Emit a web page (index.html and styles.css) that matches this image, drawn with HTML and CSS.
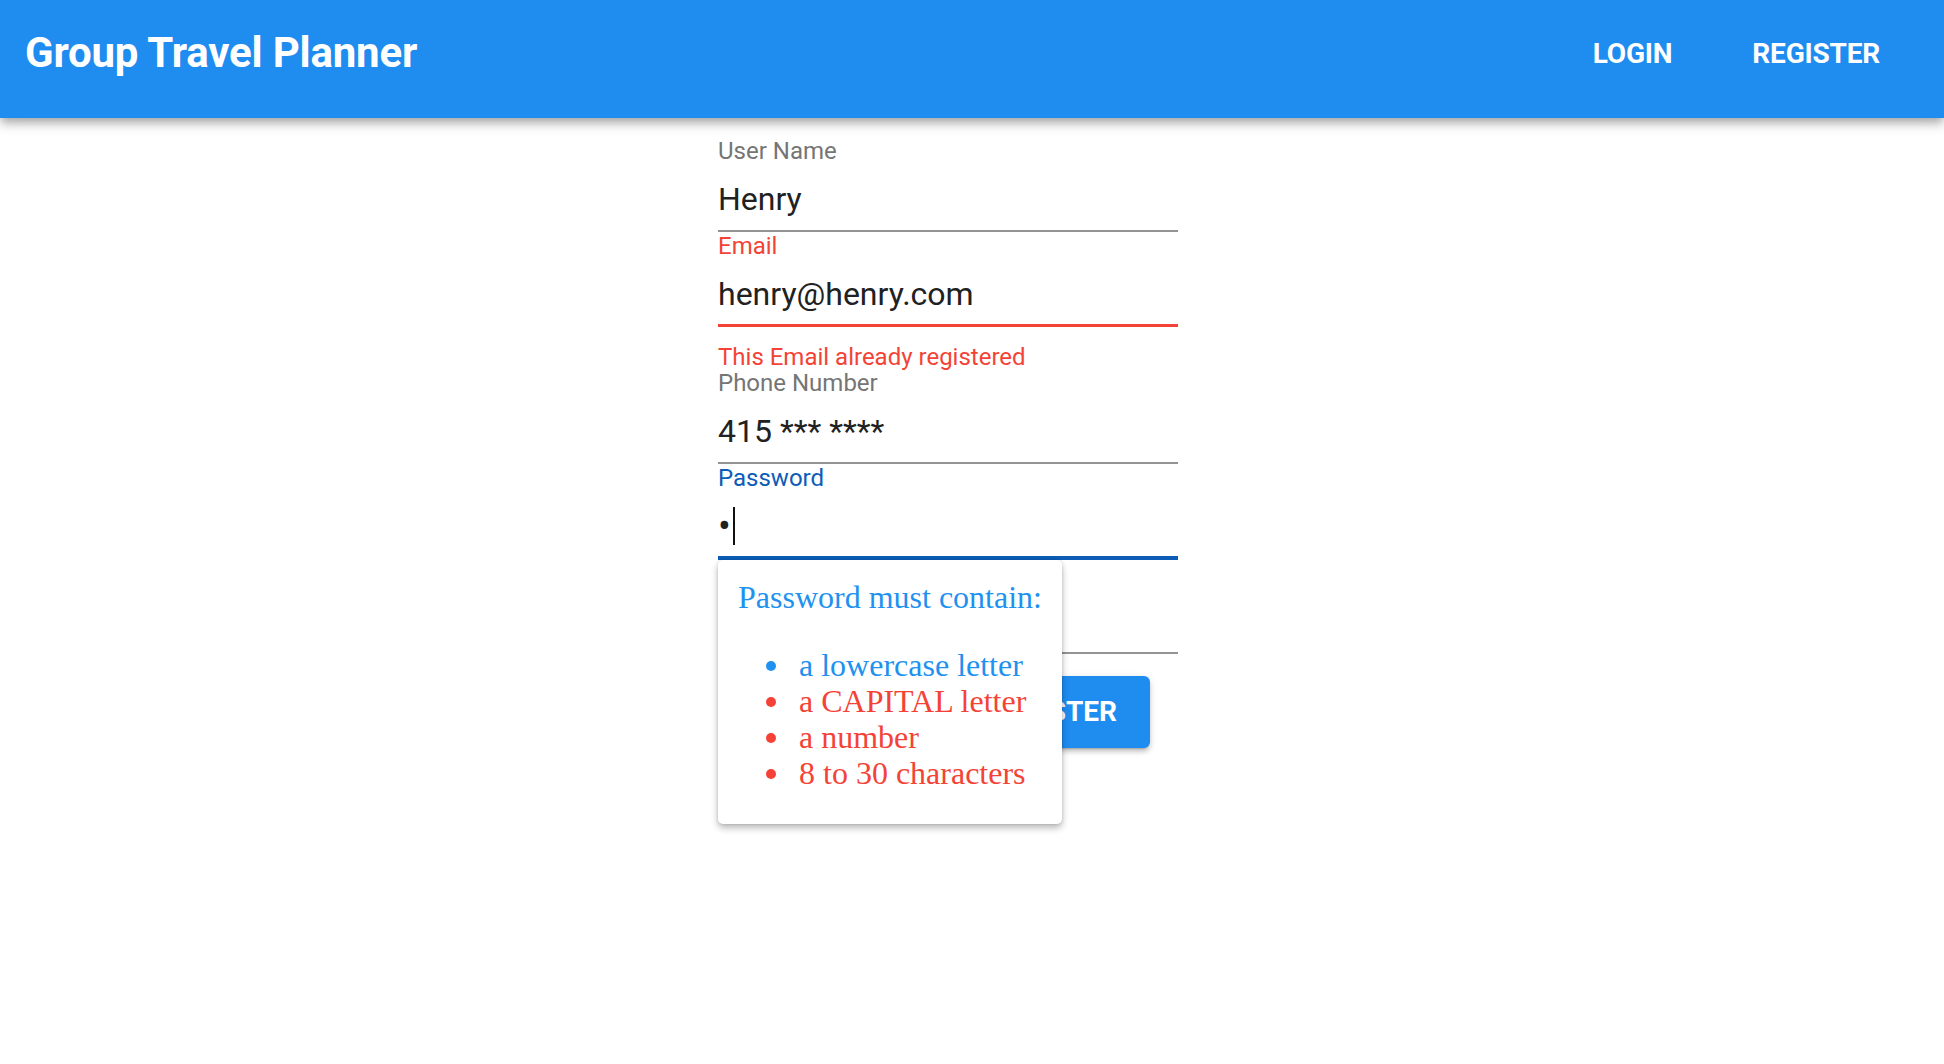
FILE: index.html
```html
<!DOCTYPE html>
<html lang="en">
<head>
<meta charset="utf-8">
<title>Group Travel Planner</title>
<link rel="stylesheet" href="styles.css">
</head>
<body>
<header class="appbar">
  <div class="brand">Group Travel Planner</div>
  <nav class="nav">
    <a class="nav-link">Login</a>
    <a class="nav-link">Register</a>
  </nav>
</header>
<main class="page">
  <form class="form">
    <div class="field">
      <div class="label">User Name</div>
      <div class="value">Henry</div>
      <div class="line"></div>
    </div>
    <div class="field field-error">
      <div class="label">Email</div>
      <div class="value">henry@henry.com</div>
      <div class="line"></div>
    </div>
    <div class="helper">This Email already registered</div>
    <div class="field">
      <div class="label">Phone Number</div>
      <div class="value">415 *** ****</div>
      <div class="line"></div>
    </div>
    <div class="field field-focus">
      <div class="label">Password</div>
      <div class="value"><span class="dot">•</span><span class="caret"></span></div>
      <div class="line"></div>
      <div class="popup">
        <div class="popup-title">Password must contain:</div>
        <ul class="rules">
          <li class="ok">a lowercase letter</li>
          <li class="bad">a CAPITAL letter</li>
          <li class="bad">a number</li>
          <li class="bad">8 to 30 characters</li>
        </ul>
      </div>
    </div>
    <div class="field">
      <div class="label"></div>
      <div class="value"></div>
      <div class="line"></div>
    </div>
    <div class="actions">
      <button type="button" class="btn">Register</button>
    </div>
  </form>
</main>
</body>
</html>
```
FILE: styles.css
```css
* { box-sizing: border-box; }
html, body { margin: 0; padding: 0; background: #fff; }
body { font-family: Roboto, "Noto Sans", "Liberation Sans", sans-serif; color: #212121; min-height: 100vh; }

.appbar {
  height: 118px;
  background: #1f8cf0;
  color: #fff;
  display: flex;
  align-items: flex-start;
  justify-content: space-between;
  padding: 28px 64px 0 25px;
  box-shadow: 0 4px 8px -2px rgba(0,0,0,0.2), 0 7px 9px 0 rgba(0,0,0,0.14), 0 2px 18px 0 rgba(0,0,0,0.12);
  position: relative;
  z-index: 2;
}
.brand { font-size: 42px; font-weight: 700; line-height: 50px; letter-spacing: -0.2px; }
.nav { display: flex; gap: 80px; padding-top: 1px; }
.nav-link { font-size: 28px; font-weight: 700; line-height: 50px; text-transform: uppercase; color: #fff; letter-spacing: -0.2px; }

.page { display: flex; justify-content: center; padding-top: 19px; min-height: calc(100vh - 118px); }
.form { width: 460px; margin-right: 48px; display: flex; flex-direction: column; padding-bottom: 120px; }

.field { position: relative; height: 95px; display: flex; flex-direction: column; }
.label { font-size: 24px; line-height: 28px; height: 28px; color: #757575; }
.value { font-size: 32px; line-height: 40px; height: 40px; margin-top: 14px; color: #212121; display: flex; align-items: center; }
.line { margin-top: 11px; height: 2px; background: #949494; position: relative; }

.field-error .label { color: #f44336; }
.field-error .line::after { content: ""; position: absolute; left: 0; right: 0; bottom: 0; height: 3px; background: #f44336; }
.field-focus .label { color: #0d5cb6; }
.field-focus .line::after { content: ""; position: absolute; left: 0; right: 0; bottom: -1px; height: 4px; background: #0d5cb6; }

.helper { font-size: 24px; line-height: 22px; color: #f44336; margin-top: 19px; margin-bottom: 1px; }

.dot { font-size: 38px; margin-left: 0; line-height: 40px; }
.caret { display: inline-block; width: 2px; height: 38px; background: #111; margin-left: 2px; }

.popup {
  position: absolute;
  top: calc(100% + 1px);
  left: 0;
  width: 344px;
  background: #fff;
  border-radius: 5px;
  padding: 19px 20px 33px;
  box-shadow: 0 4px 7px rgba(0,0,0,0.28), 0 0 3px rgba(0,0,0,0.12);
  font-family: "Liberation Serif", "Times New Roman", serif;
  z-index: 5;
}
.popup-title { font-size: 32px; line-height: 37px; color: #2191f0; }
.rules { margin: 31px 0 0; padding-left: 61px; font-size: 32px; line-height: 36px; list-style: none; }
.rules li { position: relative; }
.rules li::before {
  content: "";
  position: absolute;
  left: -33px;
  top: 14px;
  width: 10px;
  height: 10px;
  border-radius: 50%;
  background: currentColor;
}
.rules .ok { color: #2191f0; }
.rules .bad { color: #f44336; }

.actions { display: flex; justify-content: flex-end; margin-top: 22px; padding-right: 28px; }
.btn {
  height: 72px;
  padding: 0 33px;
  border: 0;
  border-radius: 6px;
  background: #1f8cf0;
  color: #fff;
  font-family: Roboto, "Liberation Sans", sans-serif;
  font-size: 28px;
  font-weight: 700;
  line-height: 72px;
  text-transform: uppercase;
  letter-spacing: 0;
  box-shadow: 0 5px 2px -4px rgba(0,0,0,0.2), 0 4px 4px 0 rgba(0,0,0,0.14), 0 2px 9px 0 rgba(0,0,0,0.12);
}
```
